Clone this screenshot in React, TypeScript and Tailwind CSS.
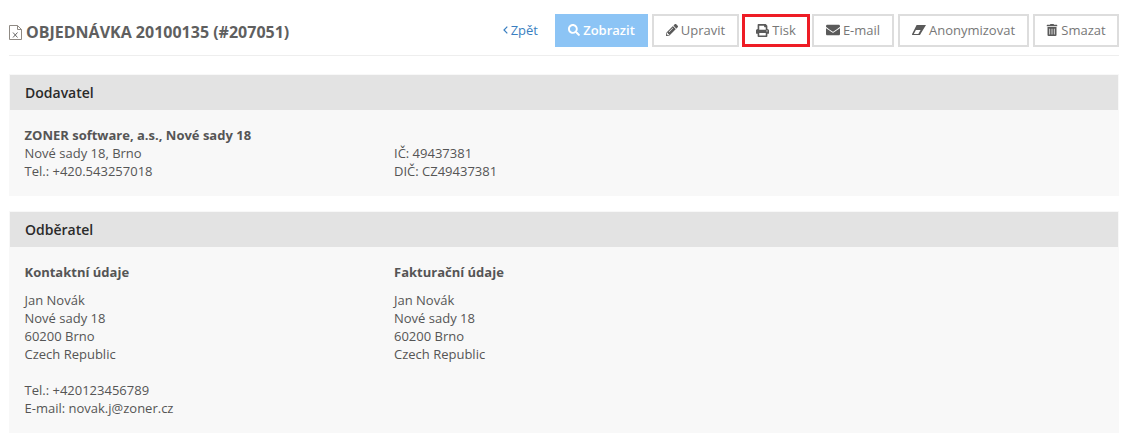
import { FaEnvelope, FaPencilAlt, FaPrint, FaSearch, FaTrashAlt } from 'react-icons/fa'

const btn = 'flex h-[33px] items-center justify-center gap-[3px] border-2 border-[#dddddd] bg-white pb-[2px] text-[#777777]'

function Panel({ title, children }: { title: string; children: React.ReactNode }) {
  return (
    <section className="border border-[#f8f8f8] bg-[#f8f8f8]">
      <h2 className="flex h-[35px] items-center bg-[#e3e3e3] pl-[15px] text-[14px] font-semibold text-[#2a2a2a]">{title}</h2>
      {children}
    </section>
  )
}

export default function App() {
  return (
    <div className="h-[446px] overflow-hidden bg-white pr-[14px] pl-[9px] font-['Open_Sans',sans-serif] text-[13px] leading-[18px] text-[#555555]">
      {/* Page header */}
      <header className="flex h-[56px] items-start justify-between border-b border-[#eeeeee] pt-[14px]">
        <h1 className="mt-[7px] flex items-center gap-[4px] text-[16px] leading-[22px] font-bold text-[#5f5f5f]">
          <svg width="13" height="15" viewBox="0 0 13 15" fill="none" stroke="#8f8a84" strokeWidth="1">
            <path d="M0.5 0.5H8.5L12.5 4.5V14.5H0.5Z" />
            <path d="M8.5 0.5V4.5H12.5" />
            <path d="M4 7.5L8.5 12.5M8.5 7.5L4 12.5" stroke="#666666" />
          </svg>
          OBJEDNÁVKA 20100135 (#207051)
        </h1>
        <div className="flex items-center">
          <a className="mr-[17px] flex items-center gap-[3px] pb-[2px] text-[#3a7fc1]">
            <svg width="5" height="8" viewBox="0 0 5 8" fill="none" stroke="currentColor" strokeWidth="1.2">
              <path d="M4.3 0.6L1 4L4.3 7.4" />
            </svg>
            Zpět
          </a>
          <button className="mr-[4px] flex h-[33px] w-[93px] items-center justify-center gap-[3px] bg-[#8cc4f5] pb-[2px] font-semibold text-white">
            <FaSearch className="text-[12px]" />
            Zobrazit
          </button>
          <button className={`${btn} mr-[3px] w-[87px]`}>
            <FaPencilAlt className="text-[12px] text-[#5a5a5a]" />
            Upravit
          </button>
          <button className="mr-[2px] flex h-[33px] w-[68px] items-center justify-center gap-[3px] border-[3px] border-[#ee1c25] bg-white pb-[1px] text-[#777777]">
            <FaPrint className="text-[13px] text-[#5a5a5a]" />
            Tisk
          </button>
          <button className={`${btn} mr-[4px] w-[82px]`}>
            <FaEnvelope className="text-[14px] text-[#5a5a5a]" />
            E-mail
          </button>
          <button className={`${btn} mr-[4px] w-[131px]`}>
            <svg width="14" height="10" viewBox="0 0 14 10" fill="#5a5a5a">
              <path d="M4.6 0H14L9.4 7.6 8 10H0.6C0.1 10 -0.1 9.5 0.1 9.1L4.6 0Z" />
              <path d="M1.8 8.9L3.9 5H8.6L6.3 8.9Z" fill="#ffffff" />
            </svg>
            Anonymizovat
          </button>
          <button className={`${btn} w-[86px]`}>
            <FaTrashAlt className="text-[12px] text-[#5a5a5a]" />
            Smazat
          </button>
        </div>
      </header>

      <div className="mt-[18px] flex flex-col gap-[15px]">
        <Panel title="Dodavatel">
          <div className="grid h-[85px] grid-cols-[369.5px_1fr] pt-[16px] pl-[14.5px]">
            <div>
              <div className="font-bold">ZONER software, a.s., Nové sady 18</div>
              <div>Nové sady 18, Brno</div>
              <div>Tel.: +420.543257018</div>
            </div>
            <div>
              <div>&nbsp;</div>
              <div>IČ: 49437381</div>
              <div>DIČ: CZ49437381</div>
            </div>
          </div>
        </Panel>

        <Panel title="Odběratel">
          <div className="grid h-[185px] grid-cols-[369.5px_1fr] pt-[16px] pl-[14.5px]">
            <div>
              <div className="mb-[10px] font-bold">Kontaktní údaje</div>
              <div>Jan Novák</div>
              <div>Nové sady 18</div>
              <div>60200 Brno</div>
              <div>Czech Republic</div>
              <div className="mt-[18px]">Tel.: +420123456789</div>
              <div>E-mail: novak.j@zoner.cz</div>
            </div>
            <div>
              <div className="mb-[10px] font-bold">Fakturační údaje</div>
              <div>Jan Novák</div>
              <div>Nové sady 18</div>
              <div>60200 Brno</div>
              <div>Czech Republic</div>
            </div>
          </div>
        </Panel>
      </div>
    </div>
  )
}
